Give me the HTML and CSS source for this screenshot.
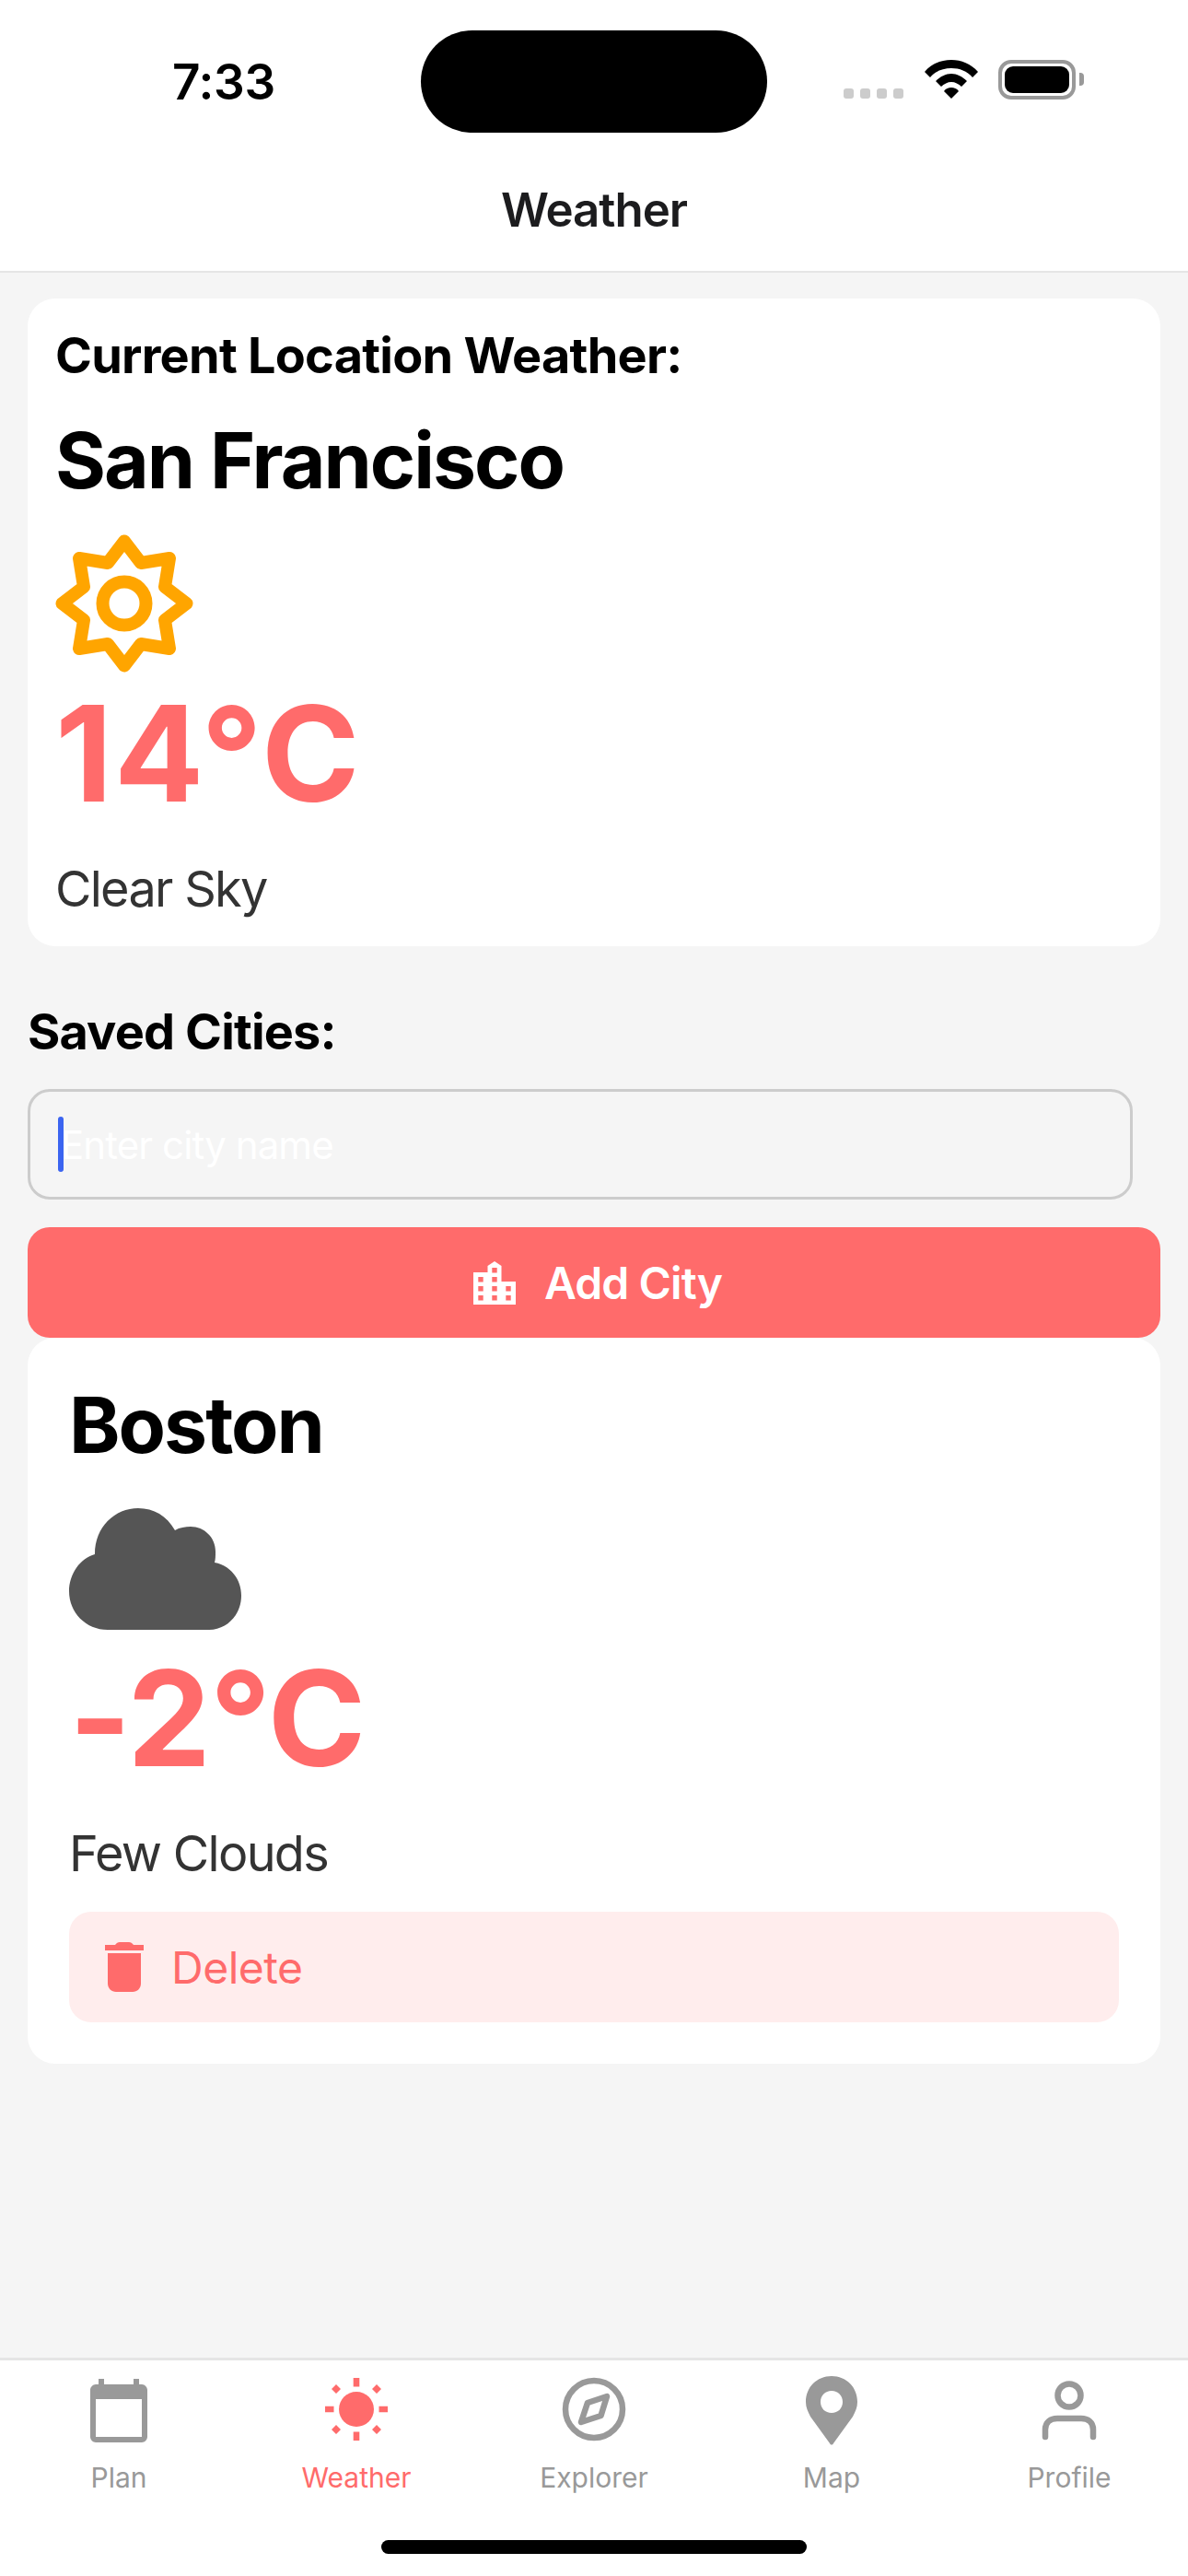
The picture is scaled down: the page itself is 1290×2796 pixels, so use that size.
FILE: index.html
```html
<!DOCTYPE html>
<html lang="en">
<head>
<meta charset="UTF-8">
<meta name="viewport" content="width=device-width, initial-scale=1.0">
<title>Weather</title>
<link rel="stylesheet" href="styles.css">
</head>
<body>
  <div class="top-bar">
    <div class="status-bar">
      <span class="time">7:33</span>
      <div class="island"></div>
      <div class="signal">
        <span></span><span></span><span></span><span></span>
      </div>
      <svg class="wifi" width="58" height="42" viewBox="0 0 58 42">
        <path d="M29 0C40 0 50 4 58 13L52 19C46 12 38 9 29 9C20 9 12 12 6 19L0 13C8 4 18 0 29 0Z"/>
        <path d="M29 15C35 15 41 18 46 23L40 29C37 26 33 24 29 24C25 24 21 26 18 29L12 23C17 18 23 15 29 15Z"/>
        <path d="M29 30C32 30 35 31 37 34L29 42L21 34C23 31 26 30 29 30Z"/>
      </svg>
      <div class="battery"><div class="battery-level"></div></div>
      <div class="battery-cap"></div>
    </div>
    <header class="page-title">Weather</header>
  </div>

  <main class="content">
    <section class="card current-card">
      <h2 class="card-label">Current Location Weather:</h2>
      <h3 class="city-name">San Francisco</h3>
      <svg class="weather-icon" width="150" height="150" viewBox="0 0 150 150" fill="none" stroke="#ffa500" stroke-width="14" stroke-linejoin="round">
        <path d="M75 7.5L93 31L124 26L119 57L142.5 75L119 93L124 124L93 119L75 142.5L57 119L26 124L31 93L7.5 75L31 57L26 26L57 31Z"/>
        <circle cx="75" cy="75" r="23.5"/>
      </svg>
      <div class="temp">14°C</div>
      <p class="condition">Clear Sky</p>
    </section>

    <h2 class="saved-title">Saved Cities:</h2>
    <div class="city-input">
      <span class="caret"></span>
      <span class="placeholder">Enter city name</span>
    </div>
    <button class="add-btn" type="button">
      <svg width="46" height="47" viewBox="0 0 46 47" fill="#fff" fill-rule="evenodd">
        <path d="M23 0L30.5 5V22H46V47H0V12H15.5V5ZM20.3 7V12.4H25.7V7ZM5.3 17V22.4H10.7V17ZM20.3 17V22.4H25.7V17ZM5.3 27V32.4H10.7V27ZM20.3 27V32.4H25.7V27ZM35.3 27V32.4H40.7V27ZM5.3 37V42.4H10.7V37ZM20.3 37V42.4H25.7V37ZM35.3 37V42.4H40.7V37Z"/>
      </svg>
      Add City
    </button>

    <section class="card city-card">
      <h3 class="city-name">Boston</h3>
      <svg class="weather-icon" width="187" height="150" viewBox="0 0 187 150" fill="#555">
        <path d="M42 142H152C172 142 187 125 187 105C187 87 175 72 158 69C159 65 159 62 159 57C159 42 147 30 132 30C126 30 120 31 115 34C106 18 92 10 75 10C50 10 28 30 28 60C12 64 0 82 0 100C0 123 18 142 42 142Z"/>
      </svg>
      <div class="temp">-2°C</div>
      <p class="condition">Few Clouds</p>
      <button class="delete-btn" type="button">
        <svg width="42" height="54" viewBox="0 0 42 54" fill="#ff6b6b">
          <path d="M11 3C12.5 1 14 0 16 0H26C28 0 29.5 1 31 3H42V9H0V3Z"/>
          <path d="M3 12H39V45C39 50 35 54 30 54H12C7 54 3 50 3 45Z"/>
        </svg>
        Delete
      </button>
    </section>
  </main>

  <nav class="tab-bar">
    <div class="tabs">
      <div class="tab">
        <svg width="84" height="84" viewBox="0 0 84 84" fill="#999">
          <path fill-rule="evenodd" d="M20 9H26V15H58V9H64V15H67C70 15 73 18 73 21V72C73 75 70 78 67 78H17C14 78 11 75 11 72V21C11 18 14 15 17 15H20ZM17 31V72H67V31Z"/>
        </svg>
        <span>Plan</span>
      </div>
      <div class="tab active">
        <svg width="84" height="84" viewBox="0 0 84 84" fill="#ff6b6b">
          <circle cx="42" cy="42" r="19"/>
          <path d="M38.7 8H45.3V17.5H38.7ZM38.7 66.5H45.3V76H38.7ZM8 38.8H17.5V45.2H8ZM66.5 38.8H76V45.2H66.5Z"/>
          <path d="M20 15L25 20L20 25L15 20ZM64 15L69 20L64 25L59 20ZM20 59L25 64L20 69L15 64ZM64 59L69 64L64 69L59 64Z"/>
        </svg>
        <span>Weather</span>
      </div>
      <div class="tab">
        <svg width="84" height="84" viewBox="0 0 84 84" fill="none" stroke="#999" stroke-width="6.5" stroke-linejoin="round">
          <circle cx="42" cy="42" r="31"/>
          <path d="M56 28L49.5 49L28 56L35 35Z"/>
        </svg>
        <span>Explorer</span>
      </div>
      <div class="tab">
        <svg width="84" height="84" viewBox="0 0 84 84" fill="#999">
          <path fill-rule="evenodd" d="M42 6C58 6 70 18 70 34C70 40 68 44 65 50L44 79C43 81 41 81 40 79L19 50C16 44 14 40 14 34C14 18 26 6 42 6ZM42 22C35 22 30 27 30 34C30 41 35 46 42 46C49 46 54 41 54 34C54 27 49 22 42 22Z"/>
        </svg>
        <span>Map</span>
      </div>
      <div class="tab">
        <svg width="84" height="84" viewBox="0 0 84 84" fill="none" stroke="#999" stroke-width="6.5" stroke-linecap="round">
          <circle cx="42" cy="27" r="12.5"/>
          <path d="M16 72V64C16 56 22 52 29 52H55C62 52 68 56 68 64V72"/>
        </svg>
        <span>Profile</span>
      </div>
    </div>
    <div class="home-indicator"></div>
  </nav>
</body>
</html>
```

FILE: styles.css
```css
* {
  box-sizing: border-box;
}

body {
  display: flex;
  flex-direction: column;
  width: 1290px;
  height: 2796px;
  margin: 0;
  overflow: hidden;
  font-family: 'Inter', 'Liberation Sans', sans-serif;
  background-color: #f5f5f5;
  color: #000;
}

h2, h3, p {
  margin: 0;
}

.top-bar {
  height: 296px;
  background-color: #fff;
  border-bottom: 2px solid #e5e5e5;
}

.status-bar {
  display: flex;
  align-items: flex-start;
  height: 197px;
  padding: 33px 0 0 187px;
}

.time {
  width: 270px;
  margin-top: 24px;
  font-size: 53px;
  font-weight: 600;
  line-height: 64px;
  letter-spacing: -0.3px;
}

.island {
  width: 376px;
  height: 111px;
  border-radius: 56px;
  background-color: #000;
}

.signal {
  display: flex;
  gap: 7px;
  margin: 63px 23px 0 83px;
}

.signal span {
  width: 11px;
  height: 11px;
  border-radius: 3px;
  background-color: #ccc;
}

.wifi {
  margin-top: 32px;
}

.battery {
  width: 84px;
  height: 43px;
  margin: 32px 0 0 22px;
  padding: 3px;
  border: 4px solid #999;
  border-radius: 14px;
}

.battery-level {
  height: 100%;
  border-radius: 9px;
  background-color: #000;
}

.battery-cap {
  width: 5px;
  height: 14px;
  margin: 46px 0 0 4px;
  border-radius: 0 4px 4px 0;
  background-color: #999;
}

.page-title {
  font-size: 51px;
  font-weight: 600;
  line-height: 62px;
  letter-spacing: -1px;
  text-align: center;
  color: #1c1c1e;
}

.content {
  flex: 1;
  padding: 28px 30px 0;
}

.card {
  background-color: #fff;
  border-radius: 30px;
}

.current-card {
  height: 703px;
  padding: 30px;
}

.card-label {
  margin-bottom: 33px;
  font-size: 54px;
  font-weight: 700;
  line-height: 63px;
  letter-spacing: -0.75px;
}

.city-name {
  font-size: 84px;
  font-weight: 700;
  line-height: 100px;
  letter-spacing: -2px;
}

.weather-icon {
  display: block;
  margin-top: 30px;
}

.temp {
  margin-top: 3px;
  font-size: 144px;
  font-weight: 700;
  line-height: 170px;
  color: #ff6b6b;
}

.current-card .temp {
  letter-spacing: 2px;
}

.city-card .temp {
  letter-spacing: -1px;
}

.condition {
  margin-top: 30px;
  font-size: 54px;
  line-height: 64px;
  letter-spacing: -1.7px;
  color: #333;
}

.saved-title {
  margin-top: 61px;
  font-size: 54px;
  font-weight: 700;
  line-height: 64px;
  letter-spacing: -0.85px;
}

.city-input {
  position: relative;
  display: flex;
  align-items: center;
  width: 1200px;
  height: 120px;
  margin-top: 30px;
  padding-left: 33px;
  border: 3px solid #ccc;
  border-radius: 24px;
}

.caret {
  position: absolute;
  left: 30px;
  top: 27px;
  width: 6px;
  height: 60px;
  border-radius: 3px;
  background-color: #3b64f0;
}

.placeholder {
  font-size: 42px;
  letter-spacing: -0.9px;
  color: #fff;
}

.add-btn,
.delete-btn {
  display: flex;
  align-items: center;
  width: 100%;
  height: 120px;
  padding: 0;
  border: none;
  border-radius: 24px;
  font-family: inherit;
  font-size: 48px;
}

.add-btn {
  justify-content: center;
  gap: 31px;
  margin-top: 30px;
  padding-left: 8px;
  background-color: #ff6b6b;
  font-weight: 600;
  letter-spacing: -0.9px;
  color: #fff;
}

.city-card {
  padding: 45px;
}

.delete-btn {
  gap: 30px;
  margin-top: 31px;
  padding-left: 39px;
  background-color: #ffeded;
  letter-spacing: -0.5px;
  color: #ff6b6b;
}

.tab-bar {
  height: 237px;
  background-color: #fff;
  border-top: 3px solid #e5e5e5;
}

.tabs {
  display: flex;
  padding-top: 11px;
}

.tab {
  display: flex;
  flex: 1;
  flex-direction: column;
  align-items: center;
  font-size: 30px;
  line-height: 36px;
  color: #999;
}

.tab span {
  margin-top: 14px;
}

.tab.active {
  color: #ff6b6b;
}

.home-indicator {
  width: 462px;
  height: 15px;
  margin: 50px auto 0;
  border-radius: 8px;
  background-color: #000;
}
```
